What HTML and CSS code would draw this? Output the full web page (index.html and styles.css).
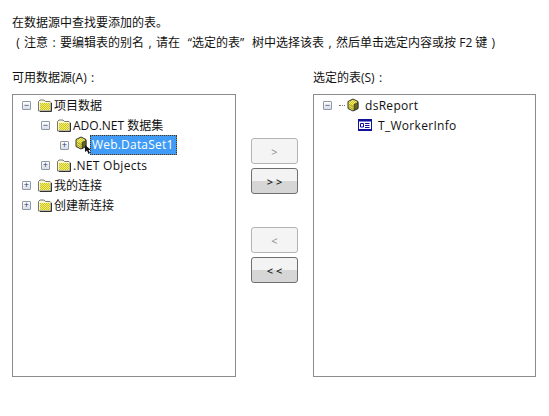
FILE: index.html
```html
<!DOCTYPE html>
<html>
    <head>
        <meta charset="utf-8">
        <title>选择数据源</title>
        <link rel="stylesheet" href="styles.css">
    </head>
    <body>
        <svg class="defs" width="0" height="0">
            <defs>
                <pattern id="dither" width="2" height="2" patternUnits="userSpaceOnUse">
                    <rect width="2" height="2" fill="#f7f25a"/>
                    <rect width="1" height="1" fill="#c9c23a"/>
                    <rect x="1" y="1" width="1" height="1" fill="#c9c23a"/>
                </pattern>
                <symbol id="folder" viewBox="0 0 15 14">
                    <path d="M1.500 13V3.500L3 2h4l1.500 1.500H13l1 1V13z" fill="#f8f6d8" stroke="#77776a"/>
                    <path d="M3 5h10v7H3z" fill="url(#dither)"/>
                    <path d="M14.500 5v8.500H3" stroke="#333" fill="none"/>
                </symbol>
                <symbol id="db" viewBox="0 0 12 14">
                    <path d="M1 3.500 6 1l5 2.500v7L6 13l-5-2.500z" fill="url(#dither)" stroke="#333"/>
                    <path d="M7 6.500l4-2v6l-4 2z" fill="#66651f" stroke="#222" stroke-width=".6"/>
                    <path d="M1 6l5 2.500M1 8.500l5 2.500" fill="none" stroke="#8a8620" stroke-width=".7"/>
                </symbol>
                <symbol id="table" viewBox="0 0 14 13">
                    <path d="M.5.5h13v11H.5z" fill="#fff" stroke="#10109c"/>
                    <path d="M0 0h14v2.500H0zM0 10h14v2H0z" fill="#10109c"/>
                    <path d="M2.500 4.500h3v3.500h-3z" fill="none" stroke="#10109c"/>
                    <path d="M7 4.500h4.500M7 6.500h4.500M7 8.500h4.500" stroke="#10109c" fill="none"/>
                </symbol>
            </defs>
        </svg>
        <p class="hint">在数据源中查找要添加的表。</p>
        <p class="hint"><span class="p">(</span>注意<span class="p">:</span>要编辑表的别名<span class="p">,</span>请在<span class="p ql">“</span>选定的表<span class="p qr">”</span>树中选择该表<span class="p">,</span>然后单击选定内容或按 F2 键<span class="p">)</span></p>
        <div class="columns">
            <div class="col">
                <label class="title">可用数据源(A)<span class="p">:</span></label>
                <div class="tree">
                    <div class="row">
                        <span class="exp">−</span>
                        <svg class="ico-folder"><use href="#folder"/></svg>
                        <span class="name">项目数据</span>
                    </div>
                    <div class="row lv1">
                        <span class="exp">−</span>
                        <svg class="ico-folder"><use href="#folder"/></svg>
                        <span class="name">ADO.NET 数据集</span>
                    </div>
                    <div class="row lv2">
                        <span class="exp plus">+</span>
                        <svg class="ico-db"><use href="#db"/></svg>
                        <svg class="ico-arrow" viewBox="0 0 7 9"><path d="M0 0v7l2-1.500L3.500 9 5 8 3.500 5H6z" fill="#111"/></svg>
                        <span class="name selected">Web.DataSet1</span>
                    </div>
                    <div class="row lv1">
                        <span class="exp plus">+</span>
                        <svg class="ico-folder"><use href="#folder"/></svg>
                        <span class="name latin">.NET Objects</span>
                    </div>
                    <div class="row">
                        <span class="exp plus">+</span>
                        <svg class="ico-folder"><use href="#folder"/></svg>
                        <span class="name">我的连接</span>
                    </div>
                    <div class="row">
                        <span class="exp plus">+</span>
                        <svg class="ico-folder"><use href="#folder"/></svg>
                        <span class="name">创建新连接</span>
                    </div>
                </div>
            </div>
            <div class="buttons">
                <button class="btn" disabled>&gt;</button>
                <button class="btn on">&gt; &gt;</button>
                <button class="btn second" disabled>&lt;</button>
                <button class="btn on">&lt; &lt;</button>
            </div>
            <div class="col">
                <label class="title">选定的表(S)<span class="p">:</span></label>
                <div class="tree">
                    <div class="row">
                        <span class="exp">−</span>
                        <span class="dots"></span>
                        <svg class="ico-db small"><use href="#db"/></svg>
                        <span class="name latin">dsReport</span>
                    </div>
                    <div class="row child">
                        <svg class="ico-table"><use href="#table"/></svg>
                        <span class="name latin">T_WorkerInfo</span>
                    </div>
                </div>
            </div>
        </div>
    </body>
</html>
```

FILE: styles.css
```css
*{margin:0;padding:0;box-sizing:border-box}
body{
    padding:13px 12px 0;
    background:#fff;
    font-family:"Open Sans","Noto Sans CJK SC",sans-serif;
    font-size:12px;
    color:#111;
}
.defs{display:block;height:0}
.hint{height:20px;line-height:20px;white-space:nowrap}
.p{display:inline-block;width:12px;text-align:center}
.ql{text-align:right}
.qr{text-align:left}
.columns{display:flex;margin-top:15px}
.col{width:224px}
.col:last-child{width:223px}
.title{display:block;height:26px;line-height:20px}
.tree{
    height:283px;
    padding:0 0 0 9px;
    border:1px solid #8c8c8c;
    background:#fff;
}
.row{display:flex;align-items:center;height:20px;white-space:nowrap}
.lv1{padding-left:19px}
.lv2{padding-left:38px}
.child{padding-left:35px}
.latin{letter-spacing:.3px}
.exp{
    flex:none;
    width:9px;
    height:9px;
    border:1px solid #8f9aa8;
    border-radius:1px;
    background:linear-gradient(#fff,#d8dde6);
    font:9px/6px "Liberation Sans",sans-serif;
    text-align:center;
    color:#33406b;
}
.plus{line-height:7px}
.ico-folder{flex:none;width:15px;height:14px;margin:0 2px 0 6px}
.ico-db{flex:none;width:12px;height:14px;margin:-4px 0 0 6px}
.ico-db.small{margin:0 6px 0 2px}
.ico-arrow{flex:none;width:7px;height:9px;margin:8px 0 0 -2px}
.ico-table{flex:none;width:14px;height:13px;margin-right:6px}
.dots{flex:none;width:6px;margin-left:7px;border-top:1px dotted #777}
.selected{
    margin-left:-2px;
    padding:0 1px;
    width:87px;
    height:20px;
    line-height:18px;
    border:1px dotted #5a3000;
    background:#3f9bf5;
    letter-spacing:.2px;
    color:#fff;
}
.buttons{display:flex;flex-direction:column;width:77px;padding:70px 0 0 15px}
.btn{
    width:47px;
    height:26px;
    margin-bottom:4px;
    border:1px solid #6f6f6f;
    border-radius:3px;
    background:linear-gradient(#f3f3f3 50%,#d6d6d6 50%);
    font-family:"Open Sans",sans-serif;
    font-size:11px;
    font-weight:600;
    color:#111;
}
.btn:disabled{
    border-color:#b4b4b4;
    background:#f4f4f4;
    font-weight:400;
    color:#8a8a8a;
}
.second{margin-top:29px}
```
